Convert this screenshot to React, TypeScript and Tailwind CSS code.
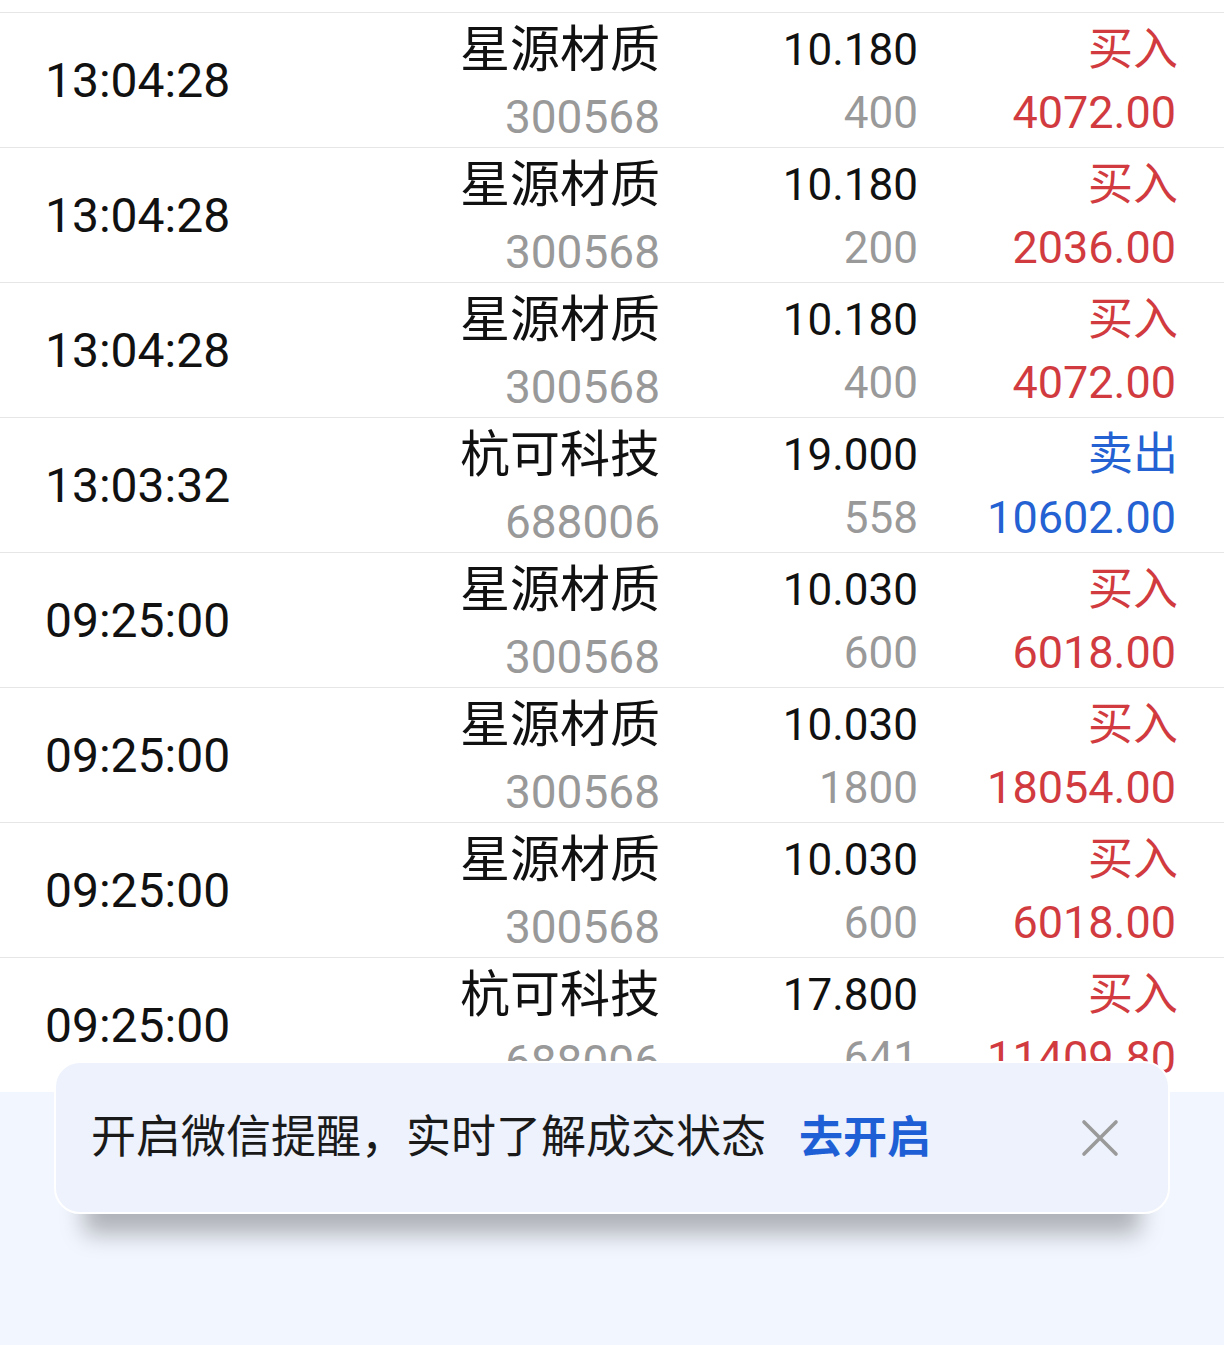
type Trade = {
  time: string;
  name: string;
  code: string;
  price: string;
  qty: string;
  side: "买入" | "卖出";
  amount: string;
};

const trades: Trade[] = [
  { time: "13:04:28", name: "星源材质", code: "300568", price: "10.180", qty: "400", side: "买入", amount: "4072.00" },
  { time: "13:04:28", name: "星源材质", code: "300568", price: "10.180", qty: "200", side: "买入", amount: "2036.00" },
  { time: "13:04:28", name: "星源材质", code: "300568", price: "10.180", qty: "400", side: "买入", amount: "4072.00" },
  { time: "13:03:32", name: "杭可科技", code: "688006", price: "19.000", qty: "558", side: "卖出", amount: "10602.00" },
  { time: "09:25:00", name: "星源材质", code: "300568", price: "10.030", qty: "600", side: "买入", amount: "6018.00" },
  { time: "09:25:00", name: "星源材质", code: "300568", price: "10.030", qty: "1800", side: "买入", amount: "18054.00" },
  { time: "09:25:00", name: "星源材质", code: "300568", price: "10.030", qty: "600", side: "买入", amount: "6018.00" },
  { time: "09:25:00", name: "杭可科技", code: "688006", price: "17.800", qty: "641", side: "买入", amount: "11409.80" },
];

function TradeRow({ t }: { t: Trade }) {
  const sideColor = t.side === "买入" ? "text-[#d13b40]" : "text-[#2461d2]";
  return (
    <div className="grid grid-cols-[400px_260px_258px_260px] h-[135px] border-t border-[#e6e6e6]">
      <div className="flex items-center pl-[45px] pb-[4px] text-[48px] text-[#111] leading-none">{t.time}</div>
      <div className="flex flex-col items-end pt-[6px]">
        <div className="h-[62px] leading-[62px] text-[50px] text-[#111]">{t.name}</div>
        <div className="h-[72px] leading-[72px] text-[46px] text-[#999]">{t.code}</div>
      </div>
      <div className="flex flex-col items-end pt-[6px]">
        <div className="h-[62px] leading-[62px] text-[44px] text-[#111]">{t.price}</div>
        <div className="h-[64px] leading-[64px] text-[44px] text-[#999]">{t.qty}</div>
      </div>
      <div className="flex flex-col items-end pt-[6px]">
        <div className={`h-[62px] leading-[62px] text-[45px] ${sideColor}`}>{t.side}</div>
        <div className={`h-[64px] leading-[64px] text-[45px] pr-[2px] ${sideColor}`}>{t.amount}</div>
      </div>
    </div>
  );
}

function CloseIcon() {
  return (
    <svg viewBox="0 0 40 40" className="ml-auto mr-[48px] w-[40px] h-[40px]" fill="none">
      <path d="M4 4 L36 36 M36 4 L4 36" stroke="#9a9a9a" strokeWidth="3.6" strokeLinecap="round" />
    </svg>
  );
}

export default function App() {
  return (
    <div
      className="relative min-h-[1345px] bg-[#f2f6fe] overflow-hidden"
      style={{ fontFamily: 'Roboto, "Noto Sans CJK SC", sans-serif' }}
    >
      <div className="bg-white pt-[12px]">
        {trades.map((t, i) => (
          <TradeRow key={i} t={t} />
        ))}
      </div>

      <div className="absolute left-[54px] top-[1061px] w-[1116px] h-[153px] rounded-[26px] border-2 border-white bg-[#edf2fc] shadow-[0_50px_22px_-30px_rgba(0,0,0,0.28)] flex items-center pl-[35px]">
        <span className="text-[45px] text-[#1a1a1a]">开启微信提醒，实时了解成交状态</span>
        <span className="ml-[33px] text-[44px] font-bold text-[#1f5fd6]">去开启</span>
        <CloseIcon />
      </div>
    </div>
  );
}
